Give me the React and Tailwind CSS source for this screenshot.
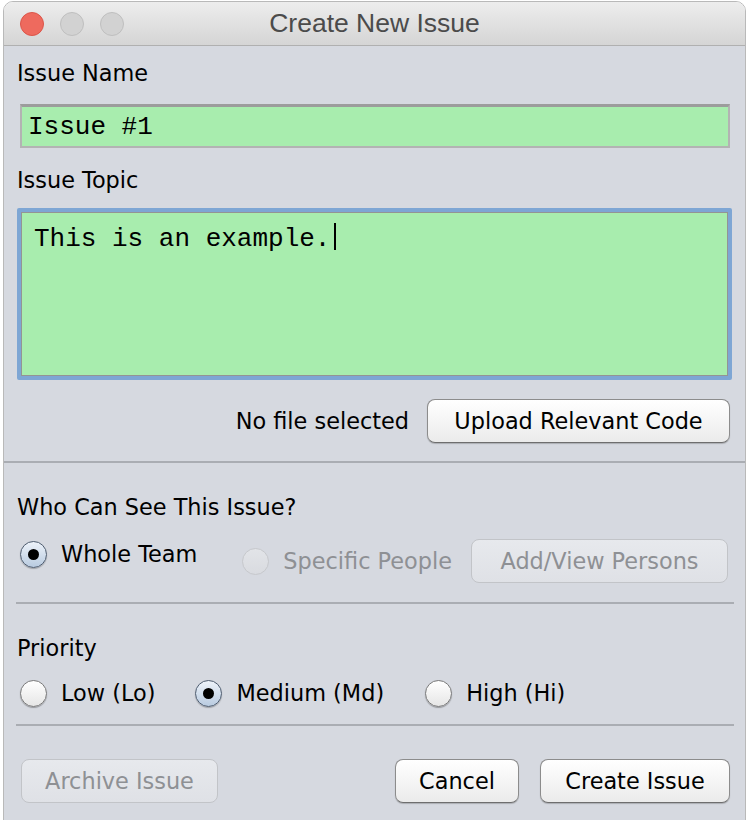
import React from "react";

const sans = { fontFamily: '"DejaVu Sans", "Noto Sans", sans-serif' };

function Radio({ state }) {
  if (state === "on") {
    return (
      <span className="flex h-[27px] w-[27px] shrink-0 items-center justify-center rounded-full border-[1.5px] border-[#4f5d70] bg-linear-to-b from-[#eef3fa] to-[#b9cbe0] shadow-[0_1px_1px_rgba(0,0,0,0.25)]">
        <span className="h-[11px] w-[11px] rounded-full bg-black" />
      </span>
    );
  }
  if (state === "disabled") {
    return (
      <span className="h-[27px] w-[27px] shrink-0 rounded-full border border-[#c6c8cc] bg-linear-to-b from-[#e2e4e8] to-[#d9dbe0]" />
    );
  }
  return (
    <span className="h-[27px] w-[27px] shrink-0 rounded-full border-[1.5px] border-[#7a7a7a] bg-linear-to-b from-white to-[#e6e6e6] shadow-[0_1px_1px_rgba(0,0,0,0.3)]" />
  );
}

function RadioItem({ state, label, className = "" }) {
  return (
    <div className={"flex h-[28px] shrink-0 items-center gap-[14px] whitespace-nowrap " + className}>
      <Radio state={state} />
      <span className={state === "disabled" ? "text-[#8e9094]" : "text-black"}>{label}</span>
    </div>
  );
}

function Button({ children, disabled, className = "" }) {
  return (
    <div
      className={
        "flex h-[44px] shrink-0 items-center justify-center whitespace-nowrap rounded-[8px] border " +
        (disabled
          ? "border-[#c2c4c8] bg-linear-to-b from-[#e7e9ed] to-[#dfe1e6] text-[#8e9094] "
          : "border-[#8c8c8c] border-b-[#6e6e6e] bg-linear-to-b from-white to-[#ebebeb] text-black shadow-[0_1px_1px_rgba(0,0,0,0.2)] ") +
        className
      }
    >
      {children}
    </div>
  );
}

export default function App() {
  return (
    <div className="h-[820px] w-[746px] overflow-hidden bg-white" style={sans}>
      <div className="ml-[3px] mt-[1px] flex h-[830px] w-[743px] flex-col overflow-hidden rounded-t-[10px] border border-[#b9b9b9]">
        {/* Title bar */}
        <div className="grid h-[44px] shrink-0 grid-cols-[1fr_auto_1fr] items-center border-b border-[#b0b0b0] bg-linear-to-b from-[#ededed] to-[#d5d5d5]">
          <div className="flex items-center gap-[16px] pl-[16px]">
            <span className="h-[24px] w-[24px] rounded-full border border-[#dc5549] bg-[#ee6a5e]" />
            <span className="h-[24px] w-[24px] rounded-full border border-[#bfbfbf] bg-[#d2d2d2]" />
            <span className="h-[24px] w-[24px] rounded-full border border-[#bfbfbf] bg-[#d2d2d2]" />
          </div>
          <div
            className="text-[26.5px] leading-none text-[#4b4b4b]"
            style={{ fontFamily: '"Liberation Sans", Arial, sans-serif' }}
          >
            Create New Issue
          </div>
          <div />
        </div>

        {/* Body */}
        <div className="flex flex-1 flex-col bg-[#d6d9e0] pl-[13px] pr-[15px] pt-[13px] text-[22.4px] leading-[28px]">
          <div>Issue Name</div>
          <div
            className="ml-[3px] mt-[17px] flex h-[44px] items-center border-2 border-t-[3px] border-[#b3b3b3] border-t-[#9c9c9c] bg-[#a8edae] pl-[6px] text-[26px] text-black"
            style={{ fontFamily: '"Liberation Mono", "Courier New", monospace' }}
          >
            Issue #1
          </div>

          <div className="mt-[18px]">Issue Topic</div>
          <div className="-mr-[2px] mt-[14px] h-[172px] rounded-[2px] border-[4px] border-[#7ea6d4]">
            <div
              className="h-full border-[1.5px] border-[#949494] bg-[#a8edae] pl-[12px] pt-[6px] text-[26px] leading-[30px] text-black"
              style={{ fontFamily: '"Liberation Mono", "Courier New", monospace' }}
            >
              This is an example.
              <span className="ml-[4px] inline-block h-[27px] w-[2px] translate-y-[4px] bg-black" />
            </div>
          </div>

          <div className="mt-[19px] flex items-center justify-end gap-[18px]">
            <span className="whitespace-nowrap">No file selected</span>
            <Button className="w-[303px]">Upload Relevant Code</Button>
          </div>

          <div className="-ml-[13px] -mr-[15px] mt-[18px] h-[2px] bg-[#aaadb3]" />

          <div className="mt-[30px]">Who Can See This Issue?</div>
          <div className="mt-[18px] flex items-start">
            <RadioItem state="on" label="Whole Team" className="ml-[3px] mt-[1px]" />
            <RadioItem state="disabled" label="Specific People" className="ml-[45px] mt-[8px]" />
            <Button disabled className="ml-[19px] w-[257px]">
              Add/View Persons
            </Button>
          </div>

          <div className="-ml-[1px] -mr-[4px] mt-[19px] h-[2px] bg-[#aaadb3]" />

          <div className="mt-[30px]">Priority</div>
          <div className="mt-[17px] flex items-center">
            <RadioItem state="off" label="Low (Lo)" className="ml-[3px]" />
            <RadioItem state="on" label="Medium (Md)" className="ml-[40px]" />
            <RadioItem state="off" label="High (Hi)" className="ml-[41px]" />
          </div>

          <div className="-ml-[1px] -mr-[4px] mt-[17px] h-[2px] bg-[#aaadb3]" />

          <div className="mt-[33px] flex items-center">
            <Button disabled className="ml-[4px] w-[197px]">
              Archive Issue
            </Button>
            <div className="flex-1" />
            <Button className="w-[124px]">Cancel</Button>
            <Button className="ml-[21px] w-[190px]">Create Issue</Button>
          </div>
        </div>
      </div>
    </div>
  );
}
